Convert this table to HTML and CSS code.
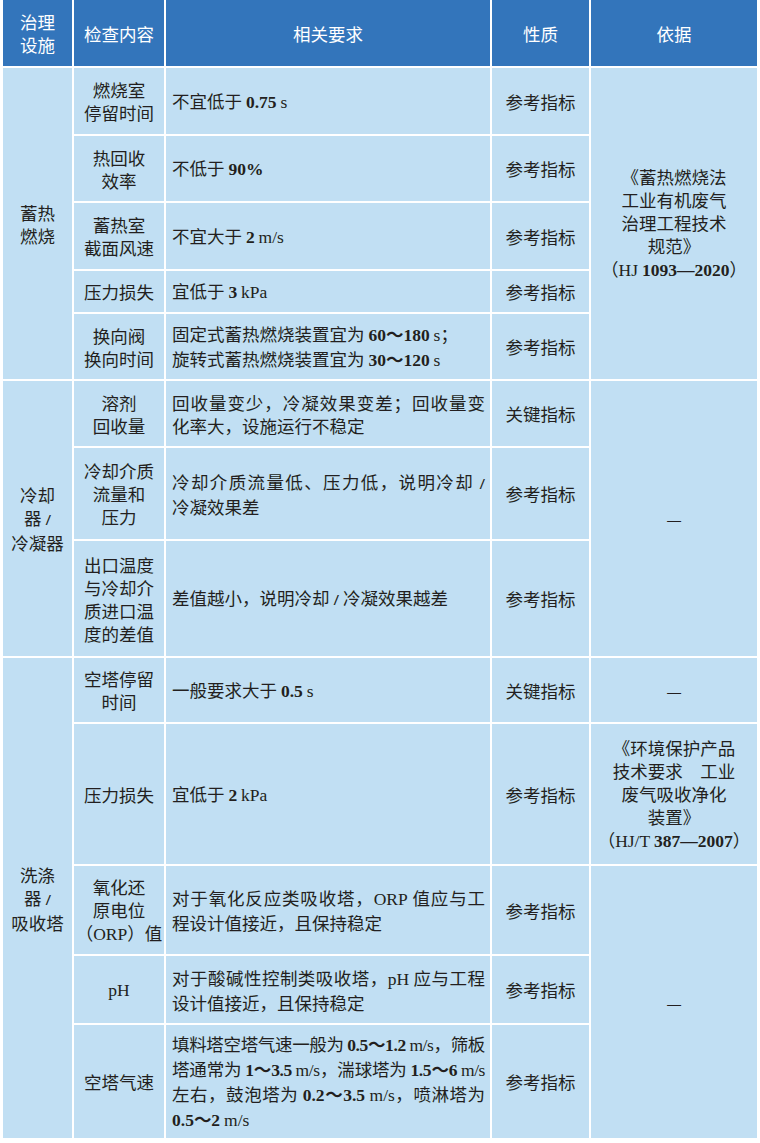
FILE: index.html
```html
<!DOCTYPE html>
<html lang="zh-CN">
<head>
<meta charset="utf-8">
<title>治理设施检查</title>
<link rel="stylesheet" href="styles.css">
</head>
<body>
<table class="grid">
  <colgroup>
    <col class="c1"><col class="c2"><col class="c3"><col class="c4"><col class="c5">
  </colgroup>
  <thead>
    <tr class="h67">
      <th>治理<br>设施</th>
      <th>检查内容</th>
      <th>相关要求</th>
      <th>性质</th>
      <th>依据</th>
    </tr>
  </thead>
  <tbody>
    <tr class="h68">
      <td class="cat" rowspan="5">蓄热<br>燃烧</td>
      <td class="item">燃烧室<br>停留时间</td>
      <td class="req">不宜低于 <span class="nb">0.75</span> <span class="nr">s</span></td>
      <td class="kind">参考指标</td>
      <td class="basis" rowspan="5">《蓄热燃烧法<br>工业有机废气<br>治理工程技术<br>规范》<br>（<span class="nr">HJ</span> <span class="nb">1093—2020</span>）</td>
    </tr>
    <tr class="h67">
      <td class="item">热回收<br>效率</td>
      <td class="req">不低于 <span class="nb">90%</span></td>
      <td class="kind">参考指标</td>
    </tr>
    <tr class="h68">
      <td class="item">蓄热室<br>截面风速</td>
      <td class="req">不宜大于 <span class="nb">2</span> <span class="nr">m/s</span></td>
      <td class="kind">参考指标</td>
    </tr>
    <tr class="h43">
      <td class="item">压力损失</td>
      <td class="req">宜低于 <span class="nb">3</span> <span class="nr">kPa</span></td>
      <td class="kind">参考指标</td>
    </tr>
    <tr class="h67">
      <td class="item">换向阀<br>换向时间</td>
      <td class="req">固定式蓄热燃烧装置宜为 <span class="nb">60～180</span> <span class="nr">s</span>；<br>旋转式蓄热燃烧装置宜为 <span class="nb">30～120</span> <span class="nr">s</span></td>
      <td class="kind">参考指标</td>
    </tr>

    <tr class="h67">
      <td class="cat" rowspan="3">冷却<br>器 <span class="sl">/</span><br>冷凝器</td>
      <td class="item">溶剂<br>回收量</td>
      <td class="req"><span class="jl">回收量变少，冷凝效果变差；回收量变</span>化率大，设施运行不稳定</td>
      <td class="kind">关键指标</td>
      <td class="basis" rowspan="3">—</td>
    </tr>
    <tr class="h93">
      <td class="item">冷却介质<br>流量和<br>压力</td>
      <td class="req"><span class="jl">冷却介质流量低、压力低，说明冷却 <span class="sl">/</span></span>冷凝效果差</td>
      <td class="kind">参考指标</td>
    </tr>
    <tr class="h117">
      <td class="item">出口温度<br>与冷却介<br>质进口温<br>度的差值</td>
      <td class="req">差值越小，说明冷却 <span class="sl">/</span> 冷凝效果越差</td>
      <td class="kind">参考指标</td>
    </tr>

    <tr class="h66">
      <td class="cat" rowspan="5">洗涤<br>器 <span class="sl">/</span><br>吸收塔</td>
      <td class="item">空塔停留<br>时间</td>
      <td class="req">一般要求大于 <span class="nb">0.5</span> <span class="nr">s</span></td>
      <td class="kind">关键指标</td>
      <td class="basis">—</td>
    </tr>
    <tr class="h142">
      <td class="item">压力损失</td>
      <td class="req">宜低于 <span class="nb">2</span> <span class="nr">kPa</span></td>
      <td class="kind">参考指标</td>
      <td class="basis">《环境保护产品<br>技术要求　工业<br>废气吸收净化<br>装置》<br>（<span class="nr">HJ/T</span> <span class="nb">387—2007</span>）</td>
    </tr>
    <tr class="h90">
      <td class="item">氧化还<br>原电位<br>（<span class="nr">ORP</span>）值</td>
      <td class="req"><span class="jl">对于氧化反应类吸收塔，<span class="nr">ORP</span> 值应与工</span>程设计值接近，且保持稳定</td>
      <td class="kind">参考指标</td>
      <td class="basis" rowspan="3">—</td>
    </tr>
    <tr class="h69">
      <td class="item"><span class="nr">pH</span></td>
      <td class="req"><span class="jl">对于酸碱性控制类吸收塔，<span class="nr">pH</span> 应与工程</span>设计值接近，且保持稳定</td>
      <td class="kind">参考指标</td>
    </tr>
    <tr class="h114">
      <td class="item">空塔气速</td>
      <td class="req"><span class="jl tight">填料塔空塔气速一般为 <span class="nb">0.5～1.2</span> <span class="nr">m/s</span>，筛板</span><span class="jl tight">塔通常为 <span class="nb">1～3.5</span> <span class="nr">m/s</span>，湍球塔为 <span class="nb">1.5～6</span> <span class="nr">m/s</span></span><span class="jl">左右，鼓泡塔为 <span class="nb">0.2～3.5</span> <span class="nr">m/s</span>，喷淋塔为</span><span class="nb">0.5～2</span> <span class="nr">m/s</span></td>
      <td class="kind">参考指标</td>
    </tr>
  </tbody>
</table>
</body>
</html>
```

FILE: styles.css
```css
html, body {
  margin: 0;
  padding: 0;
  background: #ffffff;
}

body {
  padding: 0 3px 5px 3px;
  font-family: "Noto Sans CJK SC", "Noto Sans", sans-serif;
  font-size: 17.5px;
  line-height: 23px;
  color: #231f20;
}

.grid {
  width: 754px;
  table-layout: fixed;
  border-collapse: collapse;
  border-style: hidden;
}

.c1 { width: 70px; }
.c2 { width: 92px; }
.c3 { width: 326px; }
.c4 { width: 99px; }
.c5 { width: 167px; }

.grid th,
.grid td {
  border: 2px solid #ffffff;
  padding: 0;
  vertical-align: middle;
  white-space: nowrap;
}

.grid th {
  background: #3375bb;
  color: #ffffff;
  font-weight: normal;
  text-align: center;
}

.grid td {
  background: #c1dff3;
  text-align: center;
}

.grid td.req {
  text-align: left;
  padding-left: 6px;
  padding-right: 5px;
}

.jl {
  display: block;
  text-align: justify;
  text-align-last: justify;
}

.tight {
  letter-spacing: -0.4px;
}

.nb {
  font-family: "Liberation Serif", "Noto Sans CJK SC", serif;
  font-weight: bold;
}

.nr {
  font-family: "Liberation Serif", "Noto Sans CJK SC", serif;
  font-weight: normal;
}

.sl {
  font-family: "Noto Sans", sans-serif;
  font-size: 15px;
}

.h43 { height: 43px; }
.h66 { height: 66px; }
.h67 { height: 67px; }
.h68 { height: 68px; }
.h69 { height: 69px; }
.h90 { height: 90px; }
.h93 { height: 93px; }
.h114 { height: 114px; }
.h117 { height: 117px; }
.h142 { height: 142px; }
```
